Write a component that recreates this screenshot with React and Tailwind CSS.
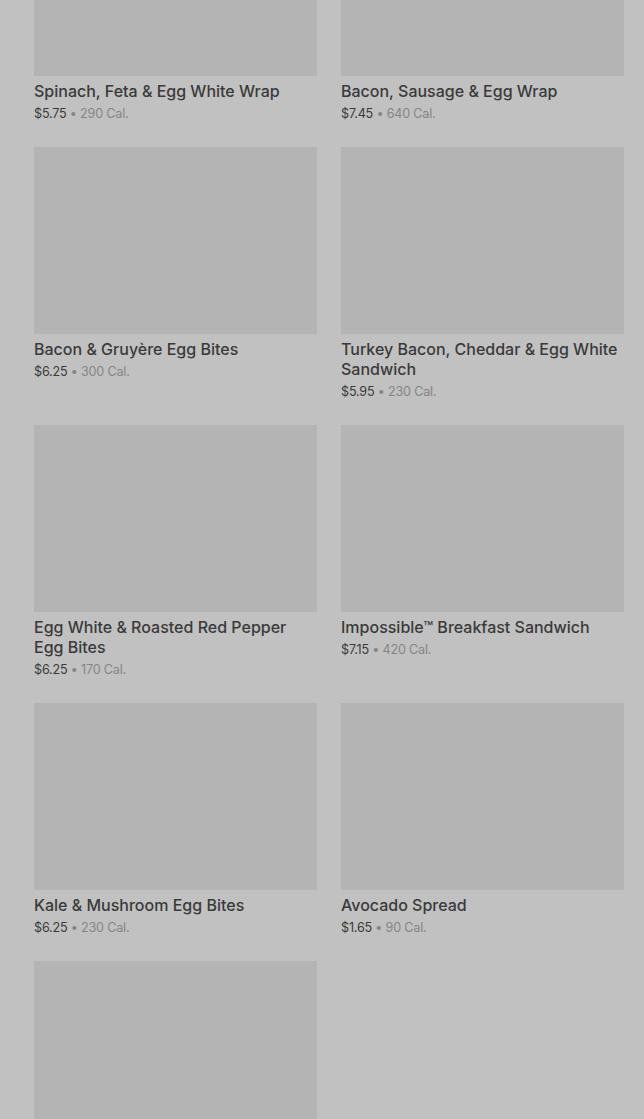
const items = [
  { name: "Spinach, Feta & Egg White Wrap", price: "$5.75", cal: "290 Cal." },
  { name: "Bacon, Sausage & Egg Wrap", price: "$7.45", cal: "640 Cal." },
  { name: "Bacon & Gruyère Egg Bites", price: "$6.25", cal: "300 Cal." },
  { name: "Turkey Bacon, Cheddar & Egg White Sandwich", price: "$5.95", cal: "230 Cal." },
  { name: "Egg White & Roasted Red Pepper Egg Bites", price: "$6.25", cal: "170 Cal." },
  { name: "Impossible™ Breakfast Sandwich", price: "$7.15", cal: "420 Cal." },
  { name: "Kale & Mushroom Egg Bites", price: "$6.25", cal: "230 Cal." },
  { name: "Avocado Spread", price: "$1.65", cal: "90 Cal." },
];

const MenuCard = ({ item }) => (
  <div className="flex flex-col">
    <div className="h-[187px] w-full bg-[#b4b4b4]" />
    <h3 className="mt-[5px] text-[16px] leading-[20px] font-medium text-[#3a3a3a]">
      {item.name}
    </h3>
    <p className="mt-1 text-[12.6px] leading-[18px] tracking-[-0.2px]">
      <span className="text-[#3a3a3a]">{item.price}</span>
      <span className="text-[#858585]"> • {item.cal}</span>
    </p>
  </div>
);

export default function App() {
  return (
    <div
      className="h-[1119px] overflow-hidden bg-[#c1c1c1]"
      style={{ fontFamily: "Inter, 'Noto Sans', sans-serif" }}
    >
      {/* grille des produits */}
      <div className="mt-[-111px] grid grid-cols-2 gap-x-6 gap-y-6 pl-[34px] pr-5">
        {items.map((item) => (
          <MenuCard key={item.name} item={item} />
        ))}
        {/* carte suivante, image seulement visible */}
        <div className="h-[187px] w-full bg-[#b4b4b4]" />
      </div>
    </div>
  );
}
